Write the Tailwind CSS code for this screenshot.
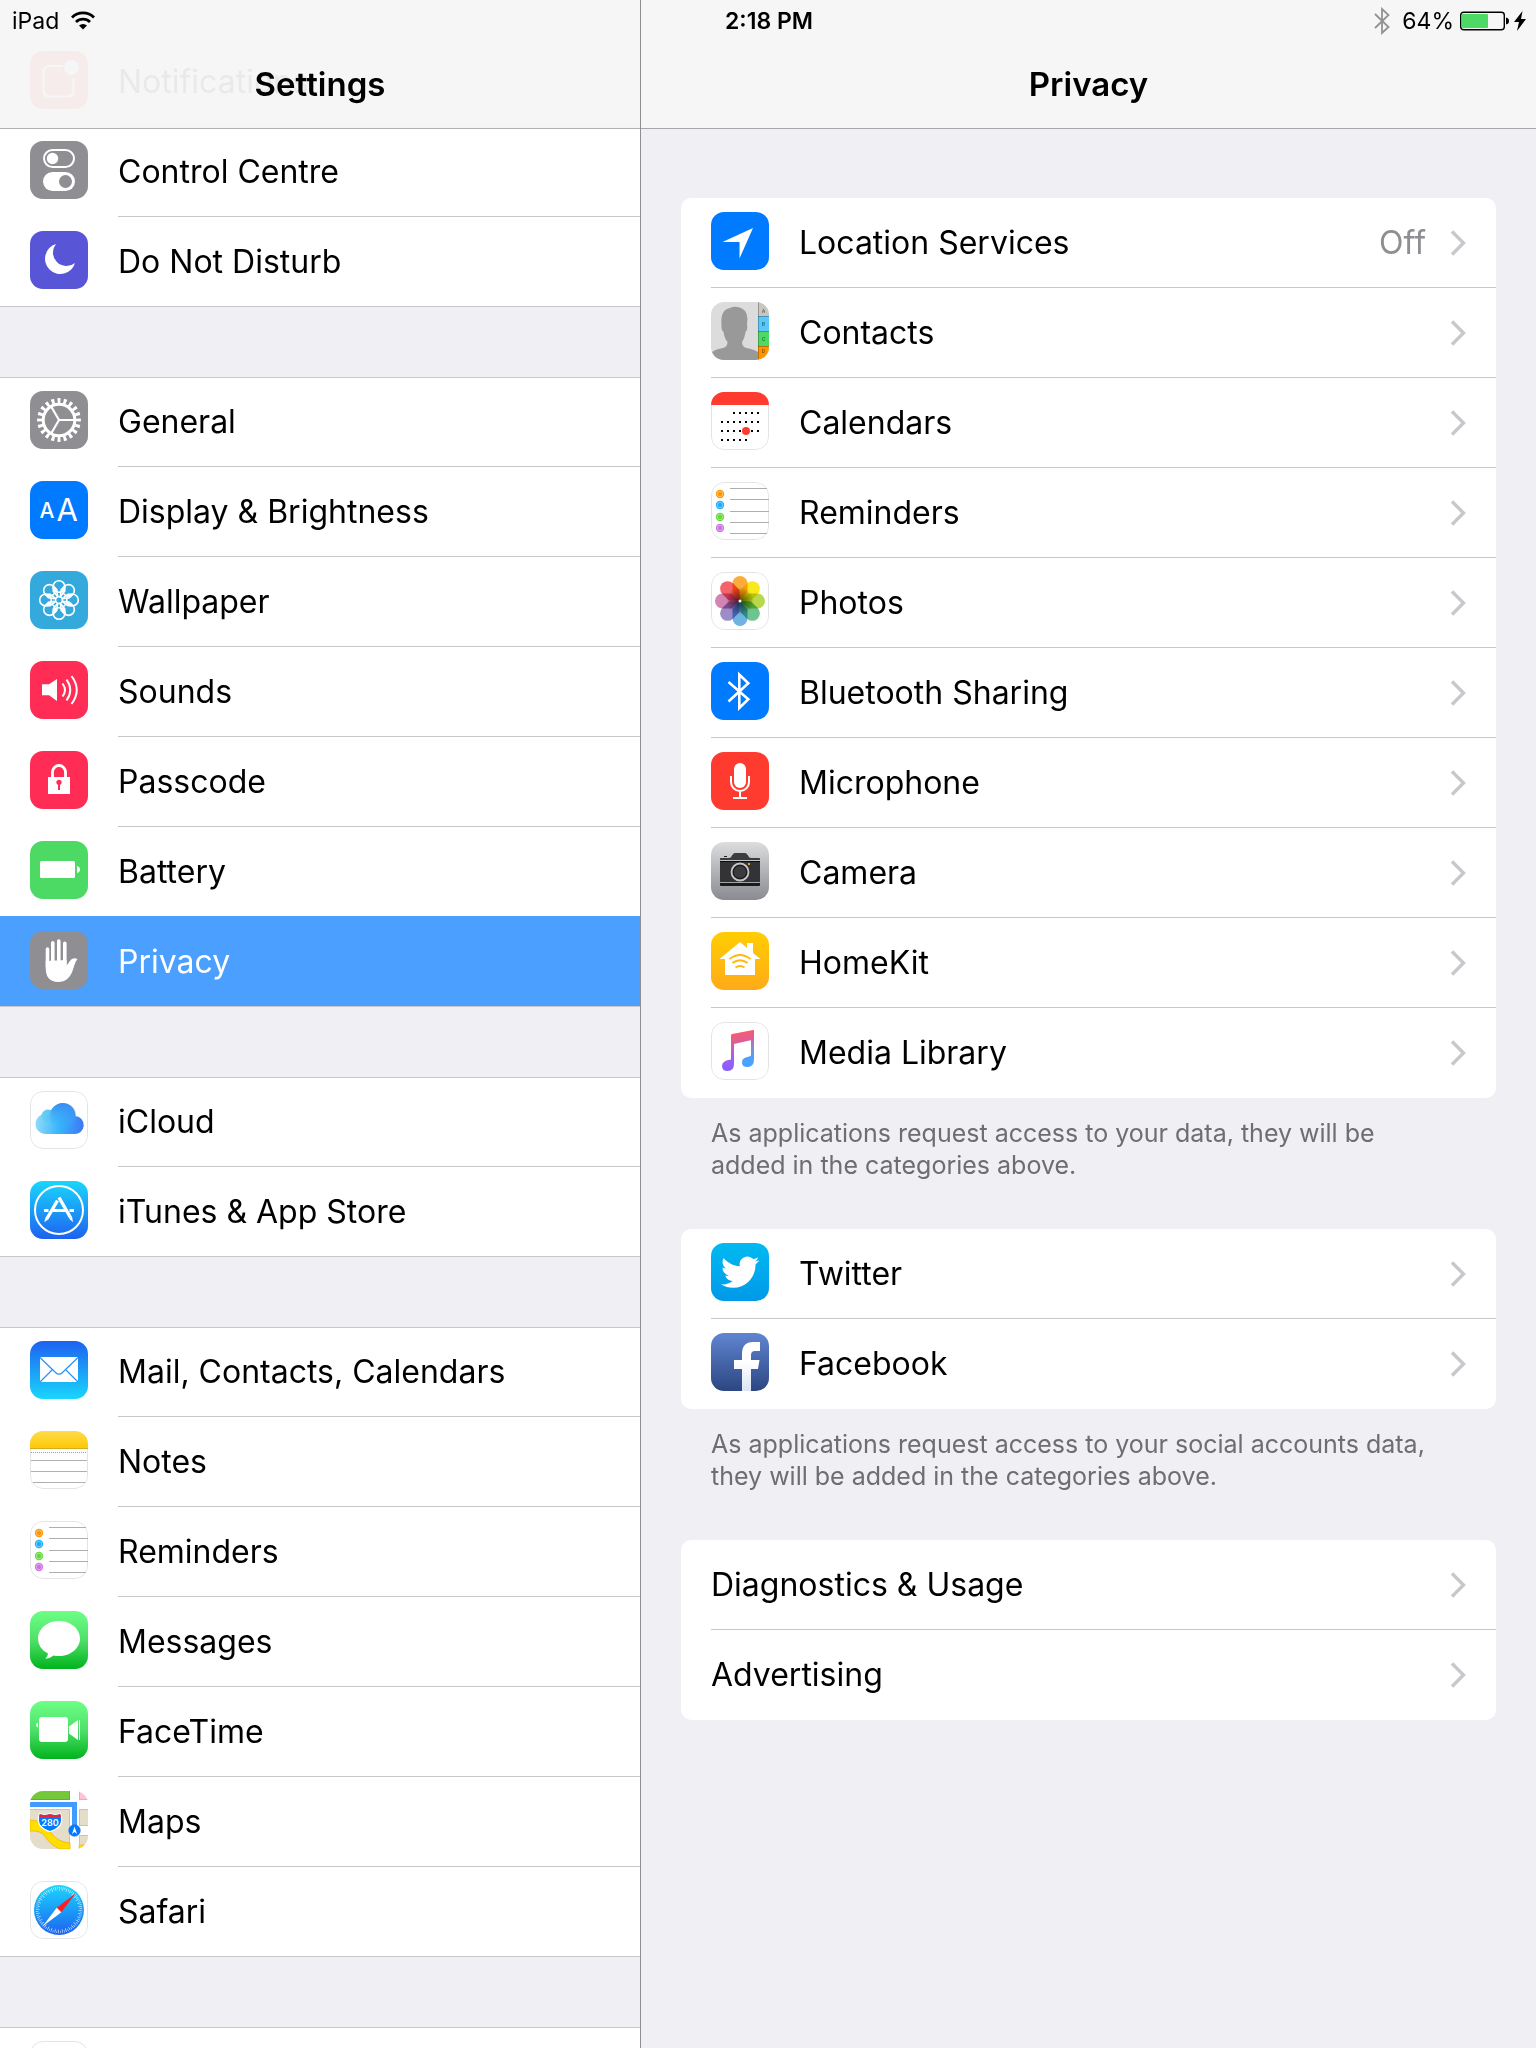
<!DOCTYPE html>
<html lang="en">

<head>
  <meta charset="UTF-8" />
  <meta name="viewport" content="width=device-width, initial-scale=1.0" />
  <title>Settings - Privacy</title>
  <script src="https://cdn.jsdelivr.net/npm/@tailwindcss/browser@4"></script>
</head>

<body class="bg-[#efeff4] font-[Inter,'Liberation_Sans',sans-serif] text-black">

  <!-- icon sheet, every tile is 58 x 58 -->
  <svg class="absolute w-0 h-0" aria-hidden="true">
    <defs>
      <linearGradient id="gGreen" x1="0" y1="0" x2="0" y2="1"><stop offset="0" stop-color="#6dff85" /><stop offset=".5" stop-color="#4fe06a" /><stop offset="1" stop-color="#00b31c" /></linearGradient>
      <linearGradient id="gBlueDown" x1="0" y1="0" x2="0" y2="1"><stop offset="0" stop-color="#1ad6fd" /><stop offset="1" stop-color="#1d62f0" /></linearGradient>
      <linearGradient id="gBlueUp" x1="0" y1="1" x2="0" y2="0"><stop offset="0" stop-color="#1ad6fd" /><stop offset="1" stop-color="#1d62f0" /></linearGradient>
      <linearGradient id="gYellow" x1="0" y1="0" x2="0" y2="1"><stop offset="0" stop-color="#ffdb4c" /><stop offset="1" stop-color="#fdc800" /></linearGradient>
      <linearGradient id="gCloud" gradientUnits="userSpaceOnUse" x1="5" y1="30" x2="53" y2="34"><stop offset="0" stop-color="#93dcf8" /><stop offset=".5" stop-color="#38b6fc" /><stop offset="1" stop-color="#3e79f4" /></linearGradient>
      <linearGradient id="gCloudTop" x1="0" y1="0" x2="0" y2="1"><stop offset="0" stop-color="#3a8af0" /><stop offset="1" stop-color="#38b6fc" stop-opacity="0" /></linearGradient>
      <linearGradient id="gCamera" x1="0" y1="0" x2="0" y2="1"><stop offset="0" stop-color="#dbddde" /><stop offset="1" stop-color="#898b91" /></linearGradient>
      <linearGradient id="gHome" x1="0" y1="0" x2="0" y2="1"><stop offset="0" stop-color="#ffcd02" /><stop offset="1" stop-color="#ffab18" /></linearGradient>
      <linearGradient id="gMusic" gradientUnits="userSpaceOnUse" x1="26" y1="10" x2="32" y2="46"><stop offset="0" stop-color="#fb5a6e" /><stop offset=".35" stop-color="#d35fa5" /><stop offset=".6" stop-color="#8c7bea" /><stop offset="1" stop-color="#5f7dff" /></linearGradient>
      <linearGradient id="gMusicL" gradientUnits="userSpaceOnUse" x1="20" y1="10" x2="20" y2="48"><stop offset=".2" stop-color="#fb5a6e" /><stop offset=".65" stop-color="#a45df0" /><stop offset="1" stop-color="#8560ff" /></linearGradient>
      <linearGradient id="gMusicR" gradientUnits="userSpaceOnUse" x1="40" y1="8" x2="40" y2="45"><stop offset=".1" stop-color="#e85a80" /><stop offset=".5" stop-color="#7d8fd6" /><stop offset=".85" stop-color="#45a4ff" /></linearGradient>
      <linearGradient id="gTwitter" x1="0" y1="0" x2="0" y2="1"><stop offset="0" stop-color="#00baf2" /><stop offset="1" stop-color="#0099e8" /></linearGradient>
      <linearGradient id="gFacebook" x1="0" y1="0" x2="0" y2="1"><stop offset="0" stop-color="#6085d1" /><stop offset="1" stop-color="#2c4682" /></linearGradient>
      <linearGradient id="gFbMark" x1="0" y1="0" x2="0" y2="1"><stop offset=".4" stop-color="#fff" /><stop offset="1" stop-color="#dde4f3" /></linearGradient>
      <radialGradient id="gPhotos"><stop offset="0" stop-color="#666" /><stop offset="1" stop-color="#fff" /></radialGradient>
    </defs>

    <symbol id="frame" viewBox="0 0 58 58">
      <rect x=".5" y=".5" width="57" height="57" rx="12.500" fill="none" stroke="#e4e4e6" />
    </symbol>

    <symbol id="notifications" viewBox="0 0 58 58">
      <rect width="58" height="58" fill="#ff3b46" />
      <path d="M33 15H19a5.500 5.500 0 0 0-5.500 5.500V40a5.500 5.500 0 0 0 5.500 5.500H38a5.500 5.500 0 0 0 5.500-5.500V27" fill="none" stroke="#fff" stroke-width="2.200" />
      <circle cx="41.500" cy="16.500" r="7.500" fill="#fff" />
    </symbol>

    <symbol id="control" viewBox="0 0 58 58">
      <rect width="58" height="58" fill="#8e8e93" />
      <rect x="14" y="9" width="30" height="17" rx="8.500" fill="none" stroke="#fff" stroke-width="2" />
      <circle cx="22.500" cy="17.500" r="5.700" fill="#fff" />
      <rect x="13" y="31" width="32" height="19" rx="9.500" fill="#fff" />
      <circle cx="35.500" cy="40.500" r="6.500" fill="#8e8e93" />
    </symbol>

    <symbol id="moon" viewBox="0 0 58 58">
      <rect width="58" height="58" fill="#5856d6" />
      <path d="M26 13A15.300 15.300 0 1 0 45 32A13.500 13.500 0 0 1 26 13z" fill="#fff" />
    </symbol>

    <symbol id="general" viewBox="0 0 58 58">
      <rect width="58" height="58" fill="#8e8e93" />
      <g fill="none" stroke="#fff">
        <circle cx="29" cy="29" r="15.800" stroke-width="3" />
        <circle cx="29" cy="29" r="19.300" stroke-width="5.200" pathLength="200" stroke-dasharray="4.800 5.200" stroke-dashoffset="2.400" />
        <path d="M29 29H45M29 29L21 15.200M29 29L21 42.800" stroke-width="2.200" />
      </g>
    </symbol>

    <symbol id="wallpaper" viewBox="0 0 58 58">
      <rect width="58" height="58" fill="#34aadc" />
      <g fill="none" stroke="#fff" stroke-width="1.600">
        <g id="petals4">
          <g id="petal"><circle cx="29" cy="15.500" r="5.800" /><path d="M23.200 15.500V20L27.500 25.500M34.800 15.500V20L30.500 25.500" /></g>
          <use href="#petal" transform="rotate(45 29 29)" />
          <use href="#petal" transform="rotate(90 29 29)" />
          <use href="#petal" transform="rotate(135 29 29)" />
        </g>
        <use href="#petals4" transform="rotate(180 29 29)" />
        <circle cx="29" cy="29" r="3.400" />
      </g>
    </symbol>

    <symbol id="sounds" viewBox="0 0 58 58">
      <rect width="58" height="58" fill="#ff2d55" />
      <path d="M12 23.300h7L27 18v22l-8-5.700H12z" fill="#fff" />
      <path d="M32.500 22.500Q37.500 29 32.500 35.500M36.500 18.500Q44 29 36.500 39.500M41.500 15Q52 29 41.500 43" fill="none" stroke="#fff" stroke-width="2" />
    </symbol>

    <symbol id="passcode" viewBox="0 0 58 58">
      <rect width="58" height="58" fill="#ff2d55" />
      <rect x="18" y="26" width="22" height="17" fill="#fff" />
      <path d="M22.500 27v-6a6.500 6.500 0 0 1 13 0v6" fill="none" stroke="#fff" stroke-width="2.800" />
      <circle cx="29" cy="31.300" r="2.600" fill="#ff2d55" />
      <rect x="28" y="32" width="2" height="7" fill="#ff2d55" />
    </symbol>

    <symbol id="battery" viewBox="0 0 58 58">
      <rect width="58" height="58" fill="#4cd964" />
      <rect x="10" y="20" width="35" height="17" rx="1.500" fill="#fff" />
      <path d="M47 25q3 1 3 3.500t-3 3.500z" fill="#fff" />
    </symbol>

    <symbol id="privacy" viewBox="0 0 58 58">
      <rect width="58" height="58" fill="#8e8e93" />
      <path d="M17.500 18v18M22.800 11.800v24M28.800 10v26M34.800 12.200v24" stroke="#fff" stroke-width="3.600" stroke-linecap="round" />
      <path d="M15.700 30V38C16 46 20 51 28 51C36 51 40 46.500 42.500 40C44 35.500 45 31 47.500 28C44.500 26.300 41.500 27.500 39.500 30.500L36.600 34.500V29z" fill="#fff" />
    </symbol>

    <symbol id="icloud" viewBox="0 0 58 58">
      <rect width="58" height="58" fill="#fff" />
      <path d="M15 43A10 10 0 0 1 11.500 23.800A6.500 6.500 0 0 1 21 19.300A13 13 0 0 1 45.500 25A9 9 0 0 1 44 43z" fill="url(#gCloud)" />
      <circle cx="33" cy="25" r="13" fill="url(#gCloudTop)" />
      <circle cx="17.500" cy="24.500" r="6" fill="#4cc4ee" opacity=".3" />
    </symbol>

    <symbol id="appstore" viewBox="0 0 58 58">
      <rect width="58" height="58" fill="url(#gBlueDown)" />
      <g fill="none" stroke="#fff">
        <circle cx="29" cy="29" r="24" stroke-width="2" />
        <path d="M14 29.500H18.500M23 29.500H35.500M39.500 29.500H44" stroke-width="3" />
        <path d="M27.500 19.500L17 37.500M29 16.500L40.500 36.500" stroke-width="3.400" />
      </g>
      <path d="M15.500 36.500l3 1.800-4.300 3zM39 37.500l3-2 1 5.700z" fill="#fff" />
    </symbol>

    <symbol id="mail" viewBox="0 0 58 58">
      <rect width="58" height="58" fill="url(#gBlueUp)" />
      <rect x="10" y="16" width="38" height="25" fill="#fff" />
      <path d="M10 16.500L25.500 31.500Q29 35 32.500 31.500L48 16.500M10 41L22 29M48 41L36 29" fill="none" stroke="#2791f5" stroke-width="1.200" />
    </symbol>

    <symbol id="notes" viewBox="0 0 58 58">
      <rect width="58" height="58" fill="#fff" />
      <path d="M0 29.500H58M0 40.500H58M0 51.500H58" stroke="#b0b0b2" />
      <path d="M1 21.500H57" stroke="#9c9c9e" stroke-dasharray="1 1" />
      <use href="#frame" width="58" height="58" />
      <rect width="58" height="18" fill="url(#gYellow)" />
      <path d="M0 17.500H58" stroke="#d3ab25" />
    </symbol>

    <symbol id="reminders" viewBox="0 0 58 58">
      <rect width="58" height="58" fill="#fff" />
      <use href="#frame" width="58" height="58" />
      <path d="M19 6.500H56M19 17.500H58M19 29.500H58M19 40.500H58M19 51.500H56" stroke="#aeaeb0" />
      <circle cx="9" cy="12" r="4.200" fill="#ff9500" />
      <circle cx="9" cy="23" r="4.200" fill="#1badf8" />
      <circle cx="9" cy="35" r="4.200" fill="#63da38" />
      <circle cx="9" cy="46" r="4.200" fill="#cc73e1" />
      <g fill="none" stroke="#fff" stroke-opacity=".5" stroke-width=".8">
        <circle cx="9" cy="12" r="2.800" /><circle cx="9" cy="23" r="2.800" /><circle cx="9" cy="35" r="2.800" /><circle cx="9" cy="46" r="2.800" />
      </g>
    </symbol>

    <symbol id="messages" viewBox="0 0 58 58">
      <rect width="58" height="58" fill="url(#gGreen)" />
      <path d="M29 10C40.600 10 50 17.800 50 27.500S40.600 45 29 45Q26 45 23.500 44.400Q20 47.500 15.300 47.700Q17.800 45.500 18 42.500Q8 37.500 8 27.500C8 17.800 17.400 10 29 10z" fill="#fff" />
    </symbol>

    <symbol id="facetime" viewBox="0 0 58 58">
      <rect width="58" height="58" fill="url(#gGreen)" />
      <rect x="9" y="16" width="29" height="25" rx="3" fill="#fff" />
      <path d="M39 25.500L48 19V39L39 32.500zM49 19h1v20h-1zM8 21.500v5q-2-1-2-2.500t2-2.500z" fill="#fff" />
    </symbol>

    <symbol id="safari" viewBox="0 0 58 58">
      <rect width="58" height="58" fill="#fff" />
      <circle cx="29" cy="29" r="25" fill="url(#gBlueDown)" />
      <circle cx="29" cy="29" r="22" fill="none" stroke="#fff" stroke-opacity=".75" stroke-width="2.400" pathLength="144" stroke-dasharray=".7 1.300" />
      <circle cx="29" cy="29" r="20.200" fill="none" stroke="#fff" stroke-opacity=".75" stroke-width="2" pathLength="144" stroke-dasharray=".7 3.300" />
      <path d="M45.500 12.500L31.300 31.300L26.700 26.700z" fill="#ff1d20" />
      <path d="M12.500 45.500L26.700 26.700L31.300 31.300z" fill="#fff" />
    </symbol>

    <symbol id="location" viewBox="0 0 58 58">
      <rect width="58" height="58" fill="#007aff" />
      <path d="M42 16L28.500 46.500V30H11.500z" fill="#fff" />
    </symbol>

    <symbol id="calendars" viewBox="0 0 58 58">
      <rect width="58" height="58" fill="#fff" />
      <use href="#frame" width="58" height="58" />
      <rect width="58" height="13" fill="#ff3b30" />
      <g stroke="#000" stroke-width="2" stroke-dasharray="2 4">
        <path d="M22 21H48M10 30H48M10 39H48M10 48H36" />
      </g>
      <circle cx="35" cy="39" r="4" fill="#ff3b30" />
    </symbol>

    <symbol id="bluetooth" viewBox="0 0 58 58">
      <rect width="58" height="58" fill="#007aff" />
      <path d="M17.500 20L37.300 37.300L28.300 46V12.500L37.300 21.300L17.500 39.500" fill="none" stroke="#fff" stroke-width="2.600" />
    </symbol>

    <symbol id="microphone" viewBox="0 0 58 58">
      <rect width="58" height="58" fill="#ff3b30" />
      <rect x="23" y="11" width="12" height="25" rx="6" fill="#fff" />
      <path d="M20 24v6a9 9 0 0 0 18 0v-6M29 39v7M22 46H36" fill="none" stroke="#fff" stroke-width="2" />
    </symbol>

    <symbol id="camera" viewBox="0 0 58 58">
      <rect width="58" height="58" fill="url(#gCamera)" />
      <path d="M9 18V16.500Q9 16 10 16H18Q20 16 21 13.500Q22 11 24 11H34Q36 11 37 13.500Q38 16 40 16H48Q49 16 49 16.500V18z" fill="#3c3c3e" />
      <path d="M13 14.500h3" stroke="#222" />
      <rect x="9" y="19" width="40" height="21" fill="#333335" />
      <path d="M9 19.500H49M9 41.500H49" stroke="#0a0a0a" />
      <rect x="9" y="41" width="40" height="3" rx="1" fill="#1a1a1b" />
      <circle cx="29" cy="30" r="8.500" fill="#2e2e30" stroke="#c3c4c8" stroke-width="1.800" />
      <circle cx="29" cy="30" r="6.500" fill="#3b3b3d" stroke="#111" stroke-width=".8" />
      <rect x="37" y="21" width="2" height="2" fill="#e5a413" />
    </symbol>

    <symbol id="homekit" viewBox="0 0 58 58">
      <rect width="58" height="58" fill="url(#gHome)" />
      <path d="M29 10L36 16V11H42V21L49.500 27H44V43H14V27H8.500z" fill="#fff" />
      <path d="M18.500 27Q29 19 39.500 27M21.500 31Q29 25.500 36.500 31M24.500 35.500Q29 32.500 33.500 35.500" fill="none" stroke="#ffb90d" stroke-width="2" />
    </symbol>

    <symbol id="media" viewBox="0 0 58 58">
      <rect width="58" height="58" fill="#fff" />
      <path d="M20 13V37.500Q11 38.500 11 44Q11 49 16.500 49Q23 49 23 42V22L20 13z" fill="url(#gMusicL)" />
      <path d="M43 8V37Q43 45 36.500 45Q31 45 31 40.500Q31 36 35.500 35.200Q40 34.500 40 33V18z" fill="url(#gMusicR)" />
      <path d="M20 13.500Q20 12.200 21.300 12L42 8Q43 7.900 43 9V17.500L23 22H20z" fill="url(#gMusic)" />
    </symbol>

    <symbol id="twitter" viewBox="0 0 58 58">
      <rect width="58" height="58" fill="url(#gTwitter)" />
      <path transform="translate(10 10) scale(1.600)" fill="#fff" d="M23.953 4.570a10 10 0 01-2.825.775 4.958 4.958 0 002.163-2.723c-.951.555-2.005.959-3.127 1.184a4.920 4.920 0 00-8.384 4.482C7.690 8.095 4.067 6.130 1.640 3.162a4.822 4.822 0 00-.666 2.475c0 1.710.870 3.213 2.188 4.096a4.904 4.904 0 01-2.228-.616v.060a4.923 4.923 0 003.946 4.827 4.996 4.996 0 01-2.212.085 4.936 4.936 0 004.604 3.417 9.867 9.867 0 01-6.102 2.105c-.390 0-.779-.023-1.170-.067a13.995 13.995 0 007.557 2.209c9.053 0 13.998-7.496 13.998-13.985 0-.210 0-.420-.015-.630A9.935 9.935 0 0024 4.590z" />
    </symbol>

    <symbol id="facebook" viewBox="0 0 58 58">
      <rect width="58" height="58" fill="url(#gFacebook)" />
      <path d="M31 58V36H23V27H31V21Q31 9 42 9H49V18H44Q40 18 40 22V27H48.500L47 36H40V58z" fill="url(#gFbMark)" />
    </symbol>

    <symbol id="chevron" viewBox="0 0 16 26">
      <path d="M2 1.500L13.500 13L2 24.500" fill="none" stroke="#c7c7cc" stroke-width="3.400" />
    </symbol>
  </svg>

  <div class="relative flex h-screen overflow-hidden">

    <!-- status bar -->
    <div class="absolute inset-x-0 top-0 z-20 grid grid-cols-3 items-center h-[42px] pl-3 pr-2.5 text-[23px]">
      <div class="flex items-center gap-3">
        <span>iPad</span>
        <svg class="w-6 h-5" viewBox="0 0 24 20">
          <path d="M1 6.500a15.500 15.500 0 0 1 22 0M5 11a10 10 0 0 1 14 0" fill="none" stroke="#000" stroke-width="2.800" />
          <path d="M12 18.500L8 14.500a6 6 0 0 1 8 0z" />
        </svg>
      </div>
      <div class="text-center font-semibold">2:18 PM</div>
      <div class="flex items-center justify-end">
        <svg class="w-4 h-7 mr-3" viewBox="0 0 16 28">
          <path d="M1 7L14.500 20L8 26V2L14.500 8L1 21" fill="none" stroke="#929292" stroke-width="1.800" />
        </svg>
        <span class="mr-1.5">64%</span>
        <svg class="w-[50px] h-5 mr-1" viewBox="0 0 50 20">
          <rect x=".7" y="1.200" width="43.600" height="17.600" rx="3" fill="none" stroke="#000" stroke-width="1.400" />
          <rect x="2" y="3" width="26" height="14" rx="1" fill="#4cd964" />
          <path d="M46 6.500q3 .5 3 3.500t-3 3.500z" />
        </svg>
        <svg class="w-3 h-5" viewBox="0 0 12 20"><path d="M8.500 0L0 11H5L3 20L12 8H7z" /></svg>
      </div>
    </div>

    <!-- left: settings list -->
    <aside class="relative w-5/12 shrink-0">
      <header class="absolute inset-x-0 top-0 z-10 h-[129px] pt-[41px] border-b border-[#b2b2b2] bg-[#f6f6f6]/95">
        <h1 class="flex h-[88px] items-center justify-center text-[33px] font-semibold">Settings</h1>
      </header>

      <nav class="flex flex-col gap-[70px] pt-[37px] text-[32px]">
        <ul class="bg-white shadow-[inset_0_-1px_0_#c8c7cc]">
          <li><a href="#" class="flex h-[90px] pl-[30px] gap-[30px]"><svg class="w-[58px] h-[58px] mt-3.5 rounded-[13px]"><use href="#notifications" /></svg><span class="flex flex-1 items-center border-b border-[#c8c7cc]">Notifications</span></a></li>
          <li><a href="#" class="flex h-[90px] pl-[30px] gap-[30px]"><svg class="w-[58px] h-[58px] mt-3.5 rounded-[13px]"><use href="#control" /></svg><span class="flex flex-1 items-center border-b border-[#c8c7cc]">Control Centre</span></a></li>
          <li><a href="#" class="flex h-[90px] pl-[30px] gap-[30px]"><svg class="w-[58px] h-[58px] mt-3.5 rounded-[13px]"><use href="#moon" /></svg><span class="flex flex-1 items-center border-b border-[#c8c7cc]">Do Not Disturb</span></a></li>
        </ul>

        <ul class="bg-white shadow-[inset_0_1px_0_#c8c7cc]">
          <li><a href="#" class="flex h-[90px] pl-[30px] gap-[30px]"><svg class="w-[58px] h-[58px] mt-3.5 rounded-[13px]"><use href="#general" /></svg><span class="flex flex-1 items-center border-b border-[#c8c7cc]">General</span></a></li>
          <li><a href="#" class="flex h-[90px] pl-[30px] gap-[30px]">
            <svg class="w-[58px] h-[58px] mt-3.5 rounded-[13px]" viewBox="0 0 58 58">
              <rect width="58" height="58" fill="#007aff" />
              <text x="9.500" y="37" font-size="21" font-weight="500" fill="#fff">A</text>
              <text x="26.500" y="40" font-size="31" fill="#fff">A</text>
            </svg>
            <span class="flex flex-1 items-center border-b border-[#c8c7cc]">Display &amp; Brightness</span></a></li>
          <li><a href="#" class="flex h-[90px] pl-[30px] gap-[30px]"><svg class="w-[58px] h-[58px] mt-3.5 rounded-[13px]"><use href="#wallpaper" /></svg><span class="flex flex-1 items-center border-b border-[#c8c7cc]">Wallpaper</span></a></li>
          <li><a href="#" class="flex h-[90px] pl-[30px] gap-[30px]"><svg class="w-[58px] h-[58px] mt-3.5 rounded-[13px]"><use href="#sounds" /></svg><span class="flex flex-1 items-center border-b border-[#c8c7cc]">Sounds</span></a></li>
          <li><a href="#" class="flex h-[90px] pl-[30px] gap-[30px]"><svg class="w-[58px] h-[58px] mt-3.5 rounded-[13px]"><use href="#passcode" /></svg><span class="flex flex-1 items-center border-b border-[#c8c7cc]">Passcode</span></a></li>
          <li><a href="#" class="flex h-[90px] pl-[30px] gap-[30px]"><svg class="w-[58px] h-[58px] mt-3.5 rounded-[13px]"><use href="#battery" /></svg><span class="flex flex-1 items-center border-b border-[#4b9fff]">Battery</span></a></li>
          <li><a href="#" aria-current="page" class="flex h-[90px] pl-[30px] gap-[30px] border-b border-[#c8c7cc] bg-[#4b9fff] text-white shadow-[0_-1px_0_#4b9fff]"><svg class="w-[58px] h-[58px] mt-3.5 rounded-[13px]"><use href="#privacy" /></svg><span class="flex flex-1 items-center">Privacy</span></a></li>
        </ul>

        <ul class="bg-white shadow-[inset_0_1px_0_#c8c7cc,inset_0_-1px_0_#c8c7cc]">
          <li><a href="#" class="flex h-[90px] pl-[30px] gap-[30px]"><svg class="w-[58px] h-[58px] mt-3.5 rounded-[13px]"><use href="#icloud" /><use href="#frame" /></svg><span class="flex flex-1 items-center border-b border-[#c8c7cc]">iCloud</span></a></li>
          <li><a href="#" class="flex h-[90px] pl-[30px] gap-[30px]"><svg class="w-[58px] h-[58px] mt-3.5 rounded-[13px]"><use href="#appstore" /></svg><span class="flex flex-1 items-center border-b border-[#c8c7cc]">iTunes &amp; App Store</span></a></li>
        </ul>

        <ul class="bg-white shadow-[inset_0_1px_0_#c8c7cc,inset_0_-1px_0_#c8c7cc]">
          <li><a href="#" class="flex h-[90px] pl-[30px] gap-[30px]"><svg class="w-[58px] h-[58px] mt-3.5 rounded-[13px]"><use href="#mail" /></svg><span class="flex flex-1 items-center border-b border-[#c8c7cc]">Mail, Contacts, Calendars</span></a></li>
          <li><a href="#" class="flex h-[90px] pl-[30px] gap-[30px]"><svg class="w-[58px] h-[58px] mt-3.5 rounded-[13px]"><use href="#notes" /></svg><span class="flex flex-1 items-center border-b border-[#c8c7cc]">Notes</span></a></li>
          <li><a href="#" class="flex h-[90px] pl-[30px] gap-[30px]"><svg class="w-[58px] h-[58px] mt-3.5 rounded-[13px]"><use href="#reminders" /></svg><span class="flex flex-1 items-center border-b border-[#c8c7cc]">Reminders</span></a></li>
          <li><a href="#" class="flex h-[90px] pl-[30px] gap-[30px]"><svg class="w-[58px] h-[58px] mt-3.5 rounded-[13px]"><use href="#messages" /></svg><span class="flex flex-1 items-center border-b border-[#c8c7cc]">Messages</span></a></li>
          <li><a href="#" class="flex h-[90px] pl-[30px] gap-[30px]"><svg class="w-[58px] h-[58px] mt-3.5 rounded-[13px]"><use href="#facetime" /></svg><span class="flex flex-1 items-center border-b border-[#c8c7cc]">FaceTime</span></a></li>
          <li><a href="#" class="flex h-[90px] pl-[30px] gap-[30px]">
            <svg class="w-[58px] h-[58px] mt-3.5 rounded-[13px]" viewBox="0 0 58 58">
              <rect width="58" height="58" fill="#fff" />
              <rect width="40" height="9" fill="#76c83b" />
              <path d="M0 8.500H39.500V0" fill="none" stroke="#69a845" />
              <rect x="49" width="9" height="9" fill="#ffc4d3" />
              <path d="M49.500 0V8.500H58" fill="none" stroke="#d9b3bb" />
              <path d="M0 18H40V58H0zM49 18H58V35H49zM49 44H58V58H49z" fill="#e4ddca" />
              <path d="M0 18.500H39.500V58M49.500 35V18.500H58M49 34.500H58M49.500 58V44.500H58" fill="none" stroke="#c9c3b4" />
              <path d="M0 29C14 30 17 35 22 43Q28 51 40 52V58H30Q20 54 14 44Q10 39.500 0 40z" fill="#ffde02" stroke="#f5b400" stroke-width=".8" />
              <path d="M49 54.500l5-1-3 4.500h-2z" fill="#ffde02" stroke="#f5b400" stroke-width=".6" />
              <path d="M0 13.500H44.500V36" fill="none" stroke="#419bff" stroke-width="5" />
              <path d="M9.500 22.500Q14.500 24.500 20 22.500Q25.500 24.500 30.500 22.500Q33 29 30 34.500Q26 39 20 40.500Q14 39 10 34.500Q7 29 9.500 22.500z" fill="#007aff" stroke="#fff" stroke-width="1.200" />
              <path d="M9.600 23Q14.500 25 20 23Q25.500 25 30.400 23L30.900 26H9.100z" fill="#e02a3c" />
              <text x="20" y="35" text-anchor="middle" font-size="9" font-weight="600" fill="#fff">280</text>
              <circle cx="44.500" cy="39.500" r="5.800" fill="#007aff" stroke="#2f6cb8" stroke-width=".6" />
              <path d="M44.500 35.500l2.500 7.500-2.500-2-2.500 2z" fill="#fff" />
            </svg>
            <span class="flex flex-1 items-center border-b border-[#c8c7cc]">Maps</span></a></li>
          <li><a href="#" class="flex h-[90px] pl-[30px] gap-[30px]"><svg class="w-[58px] h-[58px] mt-3.5 rounded-[13px]"><use href="#safari" /><use href="#frame" /></svg><span class="flex flex-1 items-center border-b border-[#c8c7cc]">Safari</span></a></li>
        </ul>

        <ul class="bg-white shadow-[inset_0_1px_0_#c8c7cc]">
          <li class="flex h-[90px] pl-[30px]"><svg class="w-[58px] h-[58px] mt-3.5"><use href="#frame" /></svg></li>
        </ul>
      </nav>
    </aside>

    <!-- right: privacy -->
    <main class="flex flex-1 flex-col border-l border-[#8e8e93]">
      <header class="h-[129px] shrink-0 pt-[41px] border-b border-[#a7a7aa] bg-[#f6f6f6]">
        <h2 class="flex h-[88px] items-center justify-center text-[33px] font-semibold">Privacy</h2>
      </header>

      <div class="px-10 pt-[69px] text-[32px]">
        <ul class="rounded-[10px] bg-white pl-[30px]">
          <li><a href="#" class="flex h-[90px] gap-[30px] border-b border-[#c8c7cc]"><svg class="w-[58px] h-[58px] mt-3.5 rounded-[13px]"><use href="#location" /></svg><span class="flex flex-1 items-center pr-[30px]"><span class="flex-1">Location Services</span><span class="mr-6 text-[#8e8e93]">Off</span><svg class="w-4 h-[26px]"><use href="#chevron" /></svg></span></a></li>
          <li><a href="#" class="flex h-[90px] gap-[30px] border-b border-[#c8c7cc]">
            <svg class="w-[58px] h-[58px] mt-3.5 rounded-[13px]" viewBox="0 0 58 58">
              <rect width="58" height="58" fill="#dcdcdd" />
              <path d="M1 58V50Q5 47 12 46Q16.500 45 16.500 40Q13.500 36.500 12.500 30Q10 28 10.500 22.500Q9 8 19 6Q25 3.500 31 6.500Q38 10 36 22.500Q37 28 34.500 30Q33.500 36.500 31 40Q31 45 35.500 46Q43 47.500 47 50V58z" fill="#999" />
              <rect x="47" width="11" height="14" fill="#c8c6bf" />
              <rect x="47" y="14" width="11" height="15" fill="#5ac8fa" />
              <rect x="47" y="29" width="11" height="15" fill="#4cd964" />
              <rect x="47" y="44" width="11" height="14" fill="#ff9500" />
              <path d="M47 14.500H58M47 29.500H58M47 44.500H58M47.500 0V58" stroke="#000" stroke-opacity=".25" />
              <g font-size="5" font-weight="600" fill="#000" fill-opacity=".5" text-anchor="middle">
                <text x="52.500" y="11">A</text><text x="52.500" y="24">B</text><text x="52.500" y="39">C</text><text x="52.500" y="51">D</text>
              </g>
            </svg>
            <span class="flex flex-1 items-center justify-between pr-[30px]">Contacts<svg class="w-4 h-[26px]"><use href="#chevron" /></svg></span></a></li>
          <li><a href="#" class="flex h-[90px] gap-[30px] border-b border-[#c8c7cc]"><svg class="w-[58px] h-[58px] mt-3.5 rounded-[13px]"><use href="#calendars" /></svg><span class="flex flex-1 items-center justify-between pr-[30px]">Calendars<svg class="w-4 h-[26px]"><use href="#chevron" /></svg></span></a></li>
          <li><a href="#" class="flex h-[90px] gap-[30px] border-b border-[#c8c7cc]"><svg class="w-[58px] h-[58px] mt-3.5 rounded-[13px]"><use href="#reminders" /></svg><span class="flex flex-1 items-center justify-between pr-[30px]">Reminders<svg class="w-4 h-[26px]"><use href="#chevron" /></svg></span></a></li>
          <li><a href="#" class="flex h-[90px] gap-[30px] border-b border-[#c8c7cc]">
            <svg class="w-[58px] h-[58px] mt-3.5 rounded-[13px]" viewBox="0 0 58 58">
              <rect width="58" height="58" fill="#fff" />
              <path class="mix-blend-multiply" fill="#fbad3c" d="M29 29L21.500 21V11.500a7.500 7.500 0 0 1 15 0V21z" />
              <path class="mix-blend-multiply" fill="#f9e81b" transform="rotate(45 29 29)" d="M29 29L21.500 21V11.500a7.500 7.500 0 0 1 15 0V21z" />
              <path class="mix-blend-multiply" fill="#b9d84c" transform="rotate(90 29 29)" d="M29 29L21.500 21V11.500a7.500 7.500 0 0 1 15 0V21z" />
              <path class="mix-blend-multiply" fill="#6ec392" transform="rotate(135 29 29)" d="M29 29L21.500 21V11.500a7.500 7.500 0 0 1 15 0V21z" />
              <path class="mix-blend-multiply" fill="#6fb3e3" transform="rotate(180 29 29)" d="M29 29L21.500 21V11.500a7.500 7.500 0 0 1 15 0V21z" />
              <path class="mix-blend-multiply" fill="#9c8cc8" transform="rotate(225 29 29)" d="M29 29L21.500 21V11.500a7.500 7.500 0 0 1 15 0V21z" />
              <path class="mix-blend-multiply" fill="#d285b4" transform="rotate(270 29 29)" d="M29 29L21.500 21V11.500a7.500 7.500 0 0 1 15 0V21z" />
              <path class="mix-blend-multiply" fill="#f4626a" transform="rotate(315 29 29)" d="M29 29L21.500 21V11.500a7.500 7.500 0 0 1 15 0V21z" />
              <circle class="mix-blend-multiply" cx="29" cy="29" r="14" fill="url(#gPhotos)" />
              <circle cx="29" cy="29" r="1.500" fill="#fff" />
              <use href="#frame" />
            </svg>
            <span class="flex flex-1 items-center justify-between pr-[30px]">Photos<svg class="w-4 h-[26px]"><use href="#chevron" /></svg></span></a></li>
          <li><a href="#" class="flex h-[90px] gap-[30px] border-b border-[#c8c7cc]"><svg class="w-[58px] h-[58px] mt-3.5 rounded-[13px]"><use href="#bluetooth" /></svg><span class="flex flex-1 items-center justify-between pr-[30px]">Bluetooth Sharing<svg class="w-4 h-[26px]"><use href="#chevron" /></svg></span></a></li>
          <li><a href="#" class="flex h-[90px] gap-[30px] border-b border-[#c8c7cc]"><svg class="w-[58px] h-[58px] mt-3.5 rounded-[13px]"><use href="#microphone" /></svg><span class="flex flex-1 items-center justify-between pr-[30px]">Microphone<svg class="w-4 h-[26px]"><use href="#chevron" /></svg></span></a></li>
          <li><a href="#" class="flex h-[90px] gap-[30px] border-b border-[#c8c7cc]"><svg class="w-[58px] h-[58px] mt-3.5 rounded-[13px]"><use href="#camera" /></svg><span class="flex flex-1 items-center justify-between pr-[30px]">Camera<svg class="w-4 h-[26px]"><use href="#chevron" /></svg></span></a></li>
          <li><a href="#" class="flex h-[90px] gap-[30px] border-b border-[#c8c7cc]"><svg class="w-[58px] h-[58px] mt-3.5 rounded-[13px]"><use href="#homekit" /></svg><span class="flex flex-1 items-center justify-between pr-[30px]">HomeKit<svg class="w-4 h-[26px]"><use href="#chevron" /></svg></span></a></li>
          <li><a href="#" class="flex h-[90px] gap-[30px]"><svg class="w-[58px] h-[58px] mt-3.5 rounded-[13px]"><use href="#media" /><use href="#frame" /></svg><span class="flex flex-1 items-center justify-between pr-[30px]">Media Library<svg class="w-4 h-[26px]"><use href="#chevron" /></svg></span></a></li>
        </ul>
        <p class="h-[131px] pt-[19px] px-[30px] text-[25px] leading-8 text-[#6d6d72]">As applications request access to your data, they will be<br>added in the categories above.</p>

        <ul class="rounded-[10px] bg-white pl-[30px]">
          <li><a href="#" class="flex h-[90px] gap-[30px] border-b border-[#c8c7cc]"><svg class="w-[58px] h-[58px] mt-3.5 rounded-[13px]"><use href="#twitter" /></svg><span class="flex flex-1 items-center justify-between pr-[30px]">Twitter<svg class="w-4 h-[26px]"><use href="#chevron" /></svg></span></a></li>
          <li><a href="#" class="flex h-[90px] gap-[30px]"><svg class="w-[58px] h-[58px] mt-3.5 rounded-[13px]"><use href="#facebook" /></svg><span class="flex flex-1 items-center justify-between pr-[30px]">Facebook<svg class="w-4 h-[26px]"><use href="#chevron" /></svg></span></a></li>
        </ul>
        <p class="h-[131px] pt-[19px] px-[30px] text-[25px] leading-8 text-[#6d6d72]">As applications request access to your social accounts data,<br>they will be added in the categories above.</p>

        <ul class="rounded-[10px] bg-white pl-[30px]">
          <li><a href="#" class="flex h-[90px] items-center justify-between pr-[30px] border-b border-[#c8c7cc]">Diagnostics &amp; Usage<svg class="w-4 h-[26px]"><use href="#chevron" /></svg></a></li>
          <li><a href="#" class="flex h-[90px] items-center justify-between pr-[30px]">Advertising<svg class="w-4 h-[26px]"><use href="#chevron" /></svg></a></li>
        </ul>
      </div>
    </main>

  </div>

</body>

</html>
